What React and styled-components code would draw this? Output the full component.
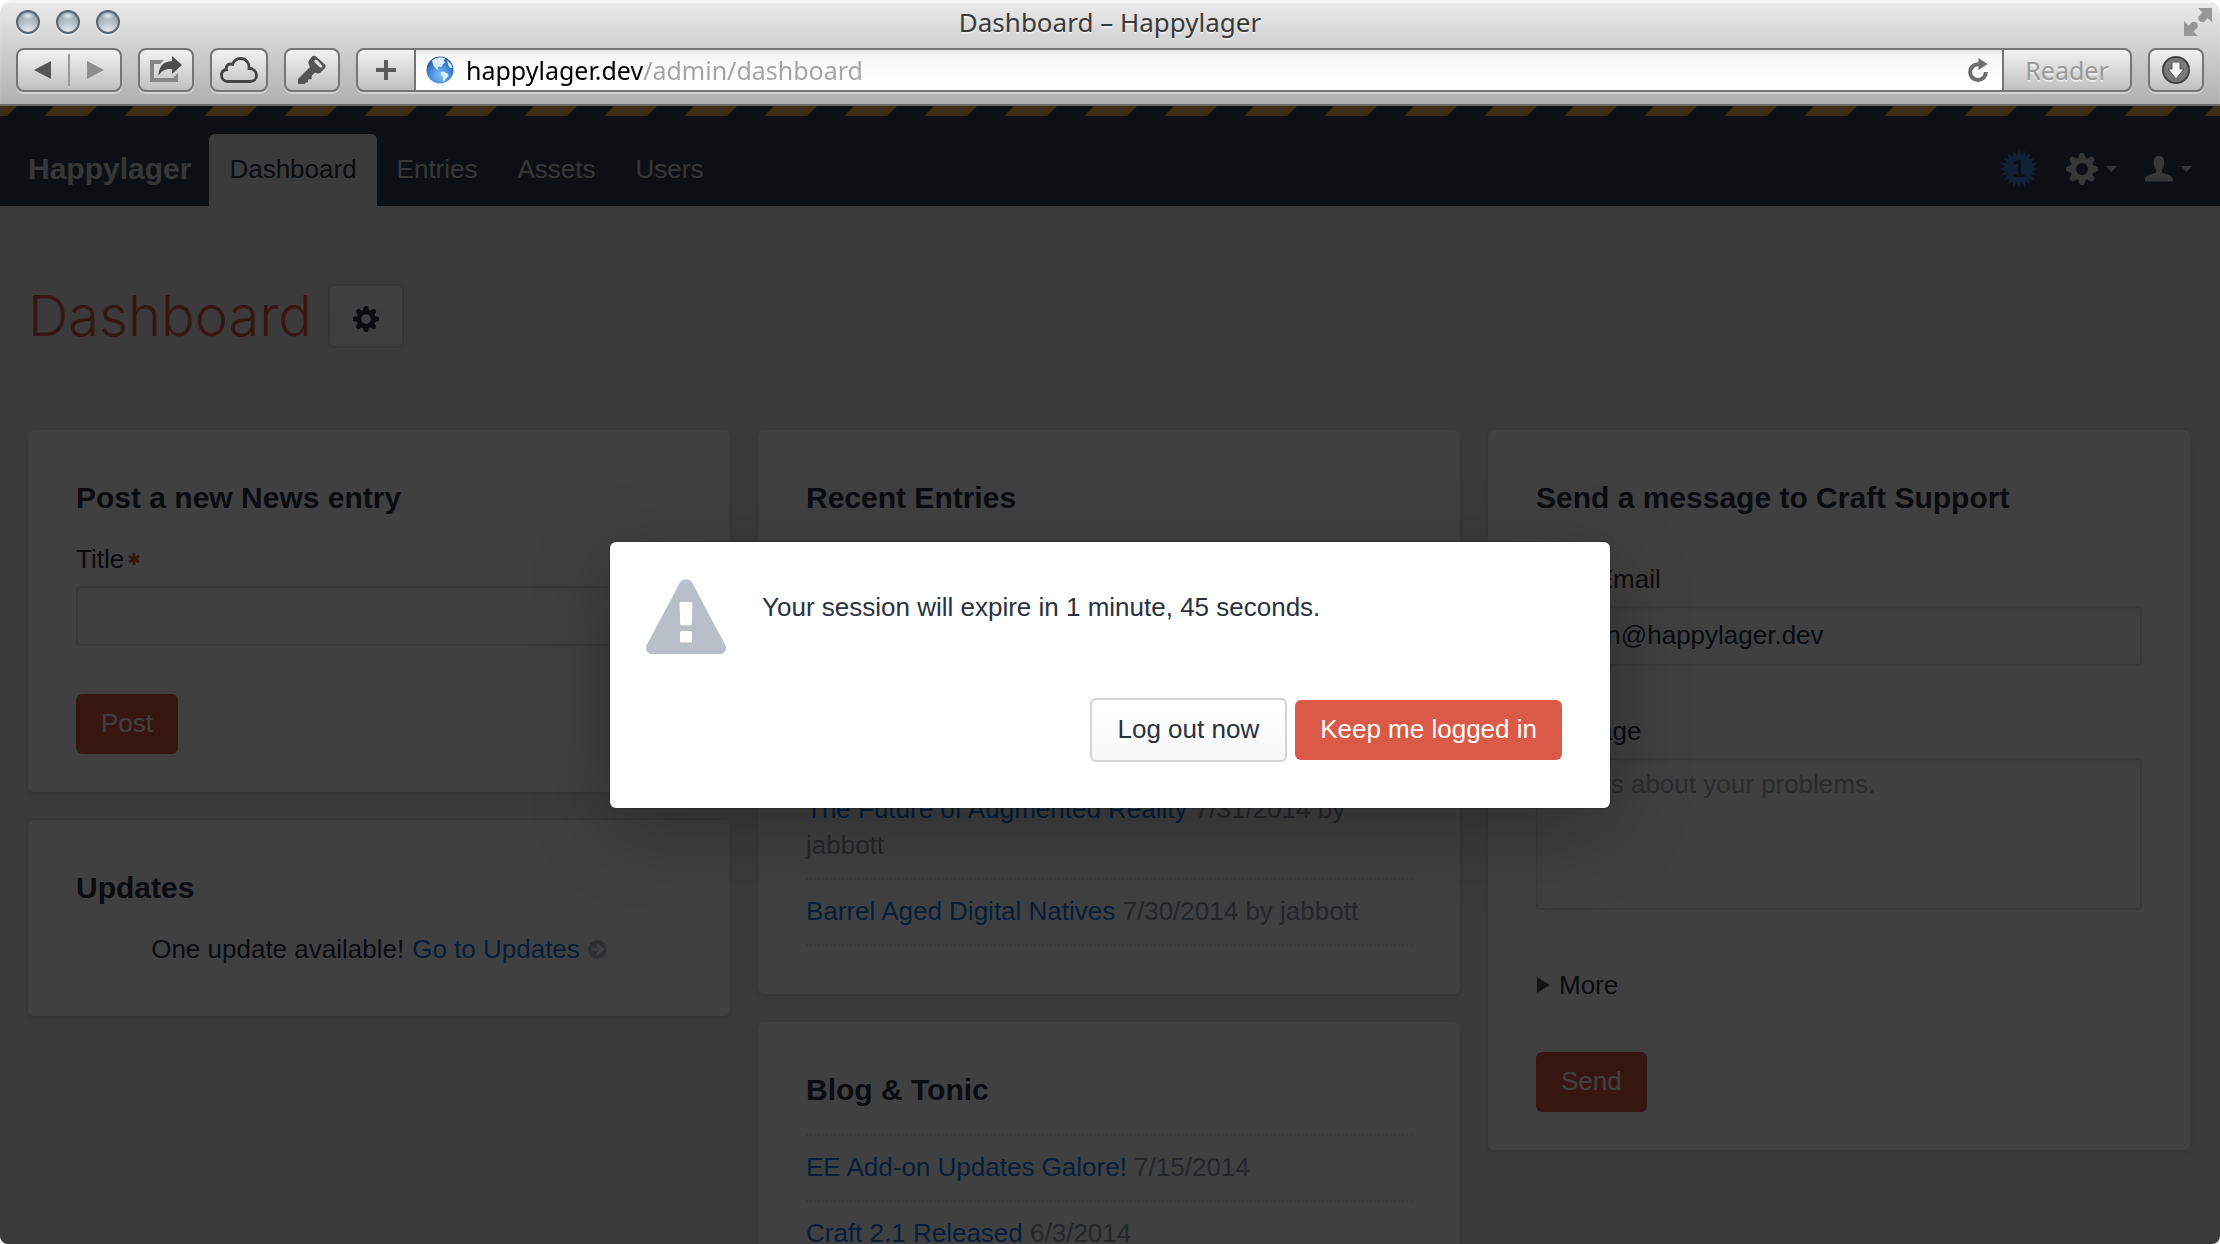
import React, { useState } from "react";
import styled, { createGlobalStyle, css } from "styled-components";

const sans = `"Liberation Sans", Arial, Helvetica, sans-serif`;
const chromeFont = `"Noto Sans", "Open Sans", sans-serif`;

const color = {
  ink: "#29323d",
  red: "#da5a47",
  link: "#0d78f2",
  light: "#8f98a3",
  header: "#333f4d",
  page: "#ebebeb",
};

const GlobalStyle = createGlobalStyle`
  *, *::before, *::after { box-sizing: border-box; }
  html, body, #root { height: 100%; }
  body {
    margin: 0;
    background: #fff;
    color: ${color.ink};
    font: 26px/36px ${sans};
  }
  button, input, textarea { font: inherit; color: inherit; margin: 0; }
  button { cursor: pointer; }
  svg { display: block; flex: none; }
`;

/* ---------- window chrome ---------- */

const Window = styled.div`
  display: flex;
  flex-direction: column;
  height: 100vh;
  overflow: hidden;
  border-radius: 14px 14px 8px 8px;
`;

const Chrome = styled.header`
  flex: none;
  padding-bottom: 12px;
  border-bottom: 2px solid #6a6a6a;
  background: linear-gradient(#ebebeb, #d0d0d0 48px, #b0b0b0);
  box-shadow: inset 0 3px 1px #f5f5f5;
  font-family: ${chromeFont};
`;

const TitleBar = styled.div`
  display: grid;
  grid-template-columns: 1fr auto 1fr;
  align-items: center;
  height: 44px;
  padding: 0 8px;
  margin-bottom: 4px;
`;

const WindowTitle = styled.div`
  font-size: 26px;
  color: #3a3a3a;
  text-shadow: 0 2px 0 rgba(255, 255, 255, 0.5);
`;

const Lights = styled.div`
  display: flex;
  gap: 16px;
  padding-left: 8px;
`;

const Light = styled.button`
  width: 24px;
  height: 24px;
  padding: 0;
  border: 2px solid #5a6670;
  border-radius: 50%;
  background:
    radial-gradient(ellipse 7px 4px at 50% 4px, #e4eef2, transparent),
    radial-gradient(circle at 50% 95%, #dce2e6 10%, #8b9ba8 85%);
  box-shadow: 0 2px 0 rgba(255, 255, 255, 0.5);
`;

const Fullscreen = styled.button`
  justify-self: end;
  padding: 0;
  border: 0;
  background: none;
`;

const Toolbar = styled.div`
  display: flex;
  gap: 16px;
  padding: 0 16px;
`;

const chromeFace = css`
  border: 2px solid #757575;
  background: linear-gradient(#f2f2f2, #c0c0c0);
`;

const ToolButton = styled.button`
  ${chromeFace}
  display: flex;
  align-items: center;
  justify-content: center;
  flex: none;
  width: ${(p) => p.$width || 56}px;
  height: 44px;
  padding: 0;
  border-radius: 8px;
  box-shadow: 0 2px 0 rgba(255, 255, 255, 0.4);
`;

const ButtonPair = styled.div`
  ${chromeFace}
  display: flex;
  width: 106px;
  height: 44px;
  padding: 4px 0;
  border-radius: 8px;
  box-shadow: 0 2px 0 rgba(255, 255, 255, 0.4);
`;

const PairButton = styled.button`
  display: flex;
  flex: 1;
  align-items: center;
  justify-content: center;
  padding: 0;
  border: 0;
  background: none;
  & + & { border-left: 2px solid #999; }
`;

const AddressGroup = styled.div`
  ${chromeFace}
  display: flex;
  flex: 1;
  height: 44px;
  border-radius: 8px;
  overflow: hidden;
  box-shadow: 0 2px 0 rgba(255, 255, 255, 0.4);
`;

const GroupButton = styled.button`
  display: flex;
  align-items: center;
  justify-content: center;
  width: ${(p) => p.$width}px;
  padding: 0;
  border: 0;
  background: none;
  color: #999;
  font-size: 25px;
  text-shadow: 0 2px 0 rgba(255, 255, 255, 0.6);
`;

const Address = styled.label`
  display: flex;
  flex: 1;
  align-items: center;
  gap: 12px;
  padding: 0 14px 0 10px;
  border: solid #757575;
  border-width: 0 2px;
  background: linear-gradient(#e2e2e2, #f6f6f6 5px, #fff 80%);
`;

const AddressInput = styled.input`
  flex: 1;
  min-width: 0;
  padding: 0;
  border: 0;
  outline: 0;
  color: #000;
  background: linear-gradient(90deg, #000 177px, #a3a3a3 177px);
  background-clip: text;
  -webkit-text-fill-color: transparent;
  font-size: 25px;
  line-height: 36px;
`;

const Reload = styled.button`
  padding: 0;
  border: 0;
  background: none;
`;

/* ---------- control panel ---------- */

const Viewport = styled.div`
  position: relative;
  flex: 1;
  min-height: 0;
  overflow: hidden;
  background: ${color.page};
`;

const Header = styled.header`
  background: ${color.header};
`;

const HeaderRow = styled.div`
  display: flex;
  align-items: flex-end;
  height: 90px;
  padding: 0 28px;
  line-height: 70px;
`;

const Brand = styled.a`
  margin-right: 18px;
  padding-bottom: 2px;
  color: #dcdcdc;
  font-size: 30px;
  font-weight: bold;
  text-decoration: none;
`;

const Nav = styled.nav`
  display: flex;
  flex: 1;
`;

const NavLink = styled.a`
  padding: 0 20px 2px;
  border-radius: 6px 6px 0 0;
  color: ${(p) => (p.$active ? color.ink : "#dcdcdc")};
  background: ${(p) => (p.$active ? color.page : "transparent")};
  text-decoration: none;
`;

const HeaderActions = styled.div`
  display: flex;
  align-items: center;
  gap: 28px;
  height: 72px;
  padding-bottom: 2px;
`;

const HeaderButton = styled.button`
  display: flex;
  align-items: center;
  gap: 8px;
  padding: 0;
  border: 0;
  background: none;
  color: #dcdcdc;
`;

const Badge = styled.button`
  display: grid;
  place-items: center;
  padding: 0;
  border: 0;
  background: none;
  color: ${color.header};
  font-size: 24px;
  font-weight: bold;
  line-height: 38px;
  & > * { grid-area: 1 / 1; }
`;

const PageHeader = styled.div`
  display: flex;
  align-items: center;
  gap: 16px;
  padding: 78px 28px 82px;
`;

const PageTitle = styled.h1`
  margin: 0;
  color: ${color.red};
  font: 300 56px/64px Inter, ${sans};
`;

const Button = styled.button`
  height: ${(p) => (p.$primary ? 60 : 64)}px;
  padding: 0 25px 2px;
  border-radius: 6px;
  white-space: nowrap;
  ${(p) =>
    p.$primary
      ? css`
          border: 0;
          background: ${color.red};
          color: #fff;
        `
      : css`
          padding: 0 26px 2px;
          border: 2px solid #d4d4d4;
          background: linear-gradient(#fff, #f8f8f8);
          color: ${color.ink};
        `}
`;

const IconButton = styled(Button)`
  padding: 6px 23px 0;
`;

const Columns = styled.main`
  display: grid;
  grid-template-columns: repeat(3, 1fr);
  align-items: start;
  gap: 28px;
  padding: 0 30px 28px 28px;
`;

const Column = styled.div`
  display: grid;
  gap: 28px;
`;

const Card = styled.section`
  padding: 48px 48px ${(p) => (p.$form ? 38 : 48)}px;
  border-radius: 6px;
  background: #fff;
  box-shadow: 0 0 0 2px rgba(0, 20, 10, 0.04), 0 4px 8px rgba(0, 20, 10, 0.06);
`;

const CardTitle = styled.h2`
  margin: 0 0 24px;
  font-size: 30px;
  line-height: 40px;
`;

const Form = styled.form`
  display: grid;
  gap: 48px;
  justify-items: start;
  padding-top: ${(p) => (p.$spaced ? 20 : 0)}px;
`;

const Field = styled.div`
  display: grid;
  gap: 10px;
  width: 100%;
`;

const Label = styled.label`
  display: flex;
  align-items: center;
  gap: 4px;
  line-height: 34px;
`;

const fieldFace = css`
  width: 100%;
  border: 2px solid #dedede;
  border-radius: 4px;
  background: #fff;
  box-shadow: inset 0 2px 6px rgba(0, 0, 0, 0.06);
  outline: 0;
`;

const TextInput = styled.input`
  ${fieldFace}
  height: 60px;
  padding: 0 12px 2px;
`;

const TextArea = styled.textarea`
  ${fieldFace}
  display: block;
  height: 152px;
  padding: 6px 12px;
  resize: none;
  &::placeholder { color: #aaaeb3; opacity: 1; }
`;

const Toggle = styled.button`
  display: flex;
  align-items: center;
  gap: 8px;
  margin-top: 10px;
  padding: 0 0 2px;
  border: 0;
  background: none;
  line-height: 34px;
`;

const Centered = styled.p`
  display: flex;
  align-items: center;
  justify-content: center;
  gap: 8px;
  margin: 0;
  padding-bottom: 2px;
  line-height: 34px;
`;

const Link = styled.a`
  color: ${color.link};
  text-decoration: none;
`;

const Entries = styled.ul`
  margin: 0;
  padding: 0;
  border-top: 2px dotted #e8e8e8;
  list-style: none;
`;

const Entry = styled.li`
  padding: 13px 0 15px;
  border-bottom: 2px dotted #e8e8e8;
  color: ${color.light};
`;

/* ---------- session dialog ---------- */

const Shade = styled.div`
  position: absolute;
  inset: 0;
  display: flex;
  align-items: center;
  justify-content: center;
  background: rgba(0, 0, 0, 0.75);
`;

const Dialog = styled.div`
  display: grid;
  gap: 44px;
  width: 1000px;
  max-width: 90%;
  padding: 36px 48px 46px 36px;
  border-radius: 6px;
  background: #fff;
  box-shadow: 0 0 2px rgba(0, 0, 0, 0.3), 0 20px 80px rgba(0, 0, 0, 0.28);
`;

const DialogBody = styled.div`
  display: flex;
  gap: 36px;
`;

const DialogText = styled.p`
  margin: 0;
  padding-top: 11px;
`;

const DialogActions = styled.div`
  display: flex;
  align-items: center;
  justify-content: flex-end;
  gap: 8px;
`;

/* ---------- icons ---------- */

const ring = (points) =>
  points.map(([r, a]) => `${(r * Math.sin(a)).toFixed(2)},${(-r * Math.cos(a)).toFixed(2)}`).join(" L");

const gearPath = () => {
  const pts = [];
  for (let i = 0; i < 8; i++) {
    const a = (i * Math.PI) / 4;
    pts.push([11.6, a - 0.32], [15.8, a - 0.15], [16.2, a], [15.8, a + 0.15], [11.6, a + 0.32]);
  }
  return `M${ring(pts)} Z M6,0 A6,6 0 1 0 -6,0 A6,6 0 1 0 6,0 Z`;
};

const burstPath = () => {
  const pts = [];
  for (let i = 0; i < 40; i++) pts.push([i % 2 ? 13.5 : 19.5, (i * Math.PI) / 20]);
  return `M${ring(pts)} Z`;
};

const GearIcon = ({ size = 32 }) => (
  <svg width={size} height={size} viewBox="-16 -16 32 32" aria-hidden="true">
    <path d={gearPath()} fill="currentColor" fillRule="evenodd" />
  </svg>
);

const CaretIcon = () => (
  <svg width="11" height="6" viewBox="0 0 11 6" aria-hidden="true">
    <path d="M0 0H11L5.500 6Z" fill="currentColor" />
  </svg>
);

const UserIcon = () => (
  <svg width="28" height="26" viewBox="0 0 28 26" aria-hidden="true">
    <path
      d="M14 0C18 0 19.500 3 19.200 7C19 10.500 18 12.500 16.800 14C16.500 16 17 17 19 17.600C24 19 28 20 28 24.500V25.500H0V24.500C0 20 4 19 9 17.600C11 17 11.500 16 11.200 14C10 12.500 9 10.500 8.800 7C8.500 3 10 0 14 0Z"
      fill="currentColor"
    />
  </svg>
);

const BurstIcon = () => (
  <svg width="38" height="38" viewBox="-19 -19 38 38" overflow="visible" aria-hidden="true">
    <path d={burstPath()} fill="#4880dc" />
  </svg>
);

const Hazard = () => (
  <svg width="100%" height="10" aria-hidden="true">
    <defs>
      <pattern id="hazard" width="80" height="10" patternUnits="userSpaceOnUse">
        <path d="M0 0H17L7 10H0Z M54 0H80V10H44Z" fill="#f0b450" />
      </pattern>
    </defs>
    <rect width="100%" height="10" fill="url(#hazard)" />
  </svg>
);

const ArrowIcon = ({ back }) => (
  <svg width="18" height="18" viewBox="0 0 18 18" aria-hidden="true">
    <path d={back ? "M17 0V18L0 9Z" : "M1 0V18L18 9Z"} fill={back ? "#555" : "#8e8e8e"} />
  </svg>
);

const ShareIcon = () => (
  <svg width="34" height="28" viewBox="0 0 34 28" aria-hidden="true">
    <path d="M15 4H1V26H29V17L25 21V22H5V8H11Z" fill="#858585" />
    <path d="M23 0L33 9L23 18V13C16 12.500 12 15 9.500 20C9.500 11 14 5.500 23 5Z" fill="#4d4d4d" />
  </svg>
);

const CloudIcon = () => (
  <svg width="40" height="28" viewBox="0 0 40 28" aria-hidden="true">
    <path
      d="M9 25.500C4.500 25.500 2.500 22.500 2.500 19.500C2.500 16.500 4.500 14 7.500 13.500C6.500 9.500 10 7 13.500 8.500C15 4.500 18 2.500 21.500 2.500C27 2.500 30.500 7 30 12.500C34.500 12.500 37.500 15.500 37.500 19.500C37.500 23 35 25.500 31 25.500Z"
      fill="none"
      stroke="#454545"
      strokeWidth="2.800"
    />
  </svg>
);

const KeyIcon = () => (
  <svg width="30" height="30" viewBox="0 0 30 30" aria-hidden="true">
    <path
      d="M15 1.500Q17 0 19 1.500L28 9.500Q29.500 11 28 13L23 18Q21 19 18 17.500L14.500 21L15 24L11 24.500V27L8 28V29H1V24L13 12Q10.500 8 12 5.500ZM18.500 4.500Q16.500 5.500 17.500 7L23 12.500Q24.500 13 25.500 11.500Q25.500 10.500 20 5Z"
      fill="#555"
      fillRule="evenodd"
    />
  </svg>
);

const PlusIcon = () => (
  <svg width="20" height="20" viewBox="0 0 20 20" aria-hidden="true">
    <path d="M8 0H12V8H20V12H12V20H8V12H0V8H8Z" fill="#5a5a5a" />
  </svg>
);

const GlobeIcon = () => (
  <svg width="28" height="28" viewBox="0 0 28 28" aria-hidden="true">
    <defs>
      <radialGradient id="sea" cx="50%" cy="70%" r="65%">
        <stop offset="0" stopColor="#7cc0f6" />
        <stop offset="0.600" stopColor="#4189d8" />
        <stop offset="1" stopColor="#2458a8" />
      </radialGradient>
    </defs>
    <circle cx="14" cy="14" r="13.500" fill="url(#sea)" />
    <path
      d="M6 4.500Q9 1.500 14 1.200Q17 1.300 19 2.500L18 5L19.500 6.500L17 8L15.500 11L12.500 10.500L11.500 12L13 14.500L10 13L7 8.500Z"
      fill="#dceefb"
    />
    <path d="M15 16L18 15.500L22 18L22.500 20L19.500 23L18 26L16.500 24L17 21L14.500 18Z M21 4L25 8L26.500 12L24 12L22 8.500Z" fill="#dceefb" />
  </svg>
);

const ReloadIcon = () => (
  <svg width="20" height="24" viewBox="0 0 20 24" aria-hidden="true">
    <path d="M12 6.200H10A7.900 7.900 0 1 0 17.900 14" fill="none" stroke="#6e6e6e" strokeWidth="4" />
    <path d="M10.500 0L19.500 6L10.500 12Z" fill="#6e6e6e" />
  </svg>
);

const DownloadIcon = () => (
  <svg width="28" height="28" viewBox="0 0 28 28" aria-hidden="true">
    <circle cx="14" cy="14" r="13" fill="#7a7a7a" stroke="#444" strokeWidth="2" />
    <path d="M10 6H18V13H22L14 23L6 13H10Z" fill="#f4f4f4" stroke="#555" />
  </svg>
);

const FullscreenIcon = () => (
  <svg width="28" height="28" viewBox="0 0 28 28" aria-hidden="true">
    <path
      d="M14 0H28V14L23.500 10L20 14Q17 14.500 15.500 13Q13.500 11 14.500 8.500L18.500 4.500Z M0 28V13L4.500 17.500L8 14Q11 13 12.700 14.800Q14.500 17 13.500 19.500L9.500 23.500L14 28Z"
      fill="#979797"
    />
  </svg>
);

const AsteriskIcon = () => (
  <svg width="12" height="12" viewBox="-6 -6 12 12" aria-hidden="true">
    <path d="M0-6V6M-5.200-3L5.200 3M-5.200 3L5.200-3" stroke={color.red} strokeWidth="3" />
  </svg>
);

const GoIcon = () => (
  <svg width="19" height="19" viewBox="0 0 19 19" aria-hidden="true">
    <circle cx="9.500" cy="9.500" r="9.500" fill="#b9bfc6" />
    <path d="M3.500 9.500H13M9 4.500L14 9.500L9 14.500" fill="none" stroke="#fff" strokeWidth="2.600" />
  </svg>
);

const TriangleIcon = () => (
  <svg width="15" height="16" viewBox="0 0 15 16" aria-hidden="true">
    <path d="M1 0L14 8L1 16Z" fill="#555" />
  </svg>
);

const AlertIcon = () => (
  <svg width="80" height="76" viewBox="0 0 80 76" aria-hidden="true">
    <path
      d="M34 4.500C36.500 0 43.500 0 46 4.500L79 66.500C81.500 71 78.500 76 74 76H6C1.500 76-1.500 71 1 66.500Z"
      fill="#b9bfc8"
    />
    <path
      d="M35 24H45Q46.500 24 46.400 25.500L45.800 46Q45.800 47.200 44.500 47.200H35.500Q34.200 47.200 34.200 46L33.600 25.500Q33.500 24 35 24ZM35.500 53H44.500Q46 53 46 54.500V63Q46 64.500 44.500 64.500H35.500Q34 64.500 34 63V54.500Q34 53 35.500 53Z"
      fill="#fff"
    />
  </svg>
);

/* ---------- content ---------- */

const navItems = ["Dashboard", "Entries", "Assets", "Users"];

const recentEntries = [
  { title: "Photography Folio Featured on BLDG.WRK", meta: "8/3/2014 by jabbott" },
  { title: "Bringing Out Play", meta: "8/2/2014 by jabbott" },
  { title: "DIY Six-Pack Carriers", meta: "8/1/2014 by jabbott" },
  { title: "The Future of Augmented Reality", meta: "7/31/2014 by jabbott" },
  { title: "Barrel Aged Digital Natives", meta: "7/30/2014 by jabbott" },
];

const blogEntries = [
  { title: "EE Add-on Updates Galore!", meta: "7/15/2014" },
  { title: "Craft 2.1 Released", meta: "6/3/2014" },
];

const EntryList = ({ items }) => (
  <Entries>
    {items.map((item) => (
      <Entry key={item.title}>
        <Link href="#">{item.title}</Link> {item.meta}
      </Entry>
    ))}
  </Entries>
);

const BrowserChrome = () => {
  const [url, setUrl] = useState("happylager.dev/admin/dashboard");
  return (
    <Chrome>
      <TitleBar>
        <Lights>
          <Light aria-label="Close" />
          <Light aria-label="Minimize" />
          <Light aria-label="Zoom" />
        </Lights>
        <WindowTitle>Dashboard – Happylager</WindowTitle>
        <Fullscreen aria-label="Full screen">
          <FullscreenIcon />
        </Fullscreen>
      </TitleBar>
      <Toolbar>
        <ButtonPair>
          <PairButton aria-label="Back">
            <ArrowIcon back />
          </PairButton>
          <PairButton aria-label="Forward">
            <ArrowIcon />
          </PairButton>
        </ButtonPair>
        <ToolButton aria-label="Share">
          <ShareIcon />
        </ToolButton>
        <ToolButton $width={58} aria-label="iCloud tabs">
          <CloudIcon />
        </ToolButton>
        <ToolButton aria-label="Passwords">
          <KeyIcon />
        </ToolButton>
        <AddressGroup>
          <GroupButton $width={56} aria-label="Add bookmark">
            <PlusIcon />
          </GroupButton>
          <Address>
            <GlobeIcon />
            <AddressInput aria-label="Address" value={url} onChange={(e) => setUrl(e.target.value)} />
            <Reload aria-label="Reload">
              <ReloadIcon />
            </Reload>
          </Address>
          <GroupButton $width={126}>Reader</GroupButton>
        </AddressGroup>
        <ToolButton aria-label="Downloads">
          <DownloadIcon />
        </ToolButton>
      </Toolbar>
    </Chrome>
  );
};

export default function App() {
  const [email, setEmail] = useState("admin@happylager.dev");
  return (
    <Window>
      <GlobalStyle />
      <BrowserChrome />
      <Viewport>
        <Header>
          <Hazard />
          <HeaderRow>
            <Brand href="#">Happylager</Brand>
            <Nav>
              {navItems.map((item, i) => (
                <NavLink key={item} href="#" $active={i === 0}>
                  {item}
                </NavLink>
              ))}
            </Nav>
            <HeaderActions>
              <Badge aria-label="1 update available">
                <BurstIcon />
                <span>1</span>
              </Badge>
              <HeaderButton aria-label="Settings">
                <GearIcon />
                <CaretIcon />
              </HeaderButton>
              <HeaderButton aria-label="Account">
                <UserIcon />
                <CaretIcon />
              </HeaderButton>
            </HeaderActions>
          </HeaderRow>
        </Header>

        <PageHeader>
          <PageTitle>Dashboard</PageTitle>
          <IconButton aria-label="Widget settings">
            <GearIcon size={26} />
          </IconButton>
        </PageHeader>

        <Columns>
          <Column>
            <Card $form>
              <CardTitle>Post a new News entry</CardTitle>
              <Form>
                <Field>
                  <Label htmlFor="title">
                    Title
                    <AsteriskIcon />
                  </Label>
                  <TextInput id="title" />
                </Field>
                <Button type="button" $primary>
                  Post
                </Button>
              </Form>
            </Card>
            <Card>
              <CardTitle>Updates</CardTitle>
              <Centered>
                <span>One update available!</span>
                <Link href="#">Go to Updates</Link>
                <GoIcon />
              </Centered>
            </Card>
          </Column>

          <Column>
            <Card>
              <CardTitle>Recent Entries</CardTitle>
              <EntryList items={recentEntries} />
            </Card>
            <Card>
              <CardTitle>Blog &amp; Tonic</CardTitle>
              <EntryList items={blogEntries} />
            </Card>
          </Column>

          <Column>
            <Card $form>
              <CardTitle>Send a message to Craft Support</CardTitle>
              <Form $spaced>
                <Field>
                  <Label htmlFor="email">Your Email</Label>
                  <TextInput id="email" value={email} onChange={(e) => setEmail(e.target.value)} />
                </Field>
                <Field>
                  <Label htmlFor="message">Message</Label>
                  <TextArea id="message" placeholder="Tell us about your problems." />
                </Field>
                <Toggle type="button">
                  <TriangleIcon />
                  More
                </Toggle>
                <Button type="button" $primary>
                  Send
                </Button>
              </Form>
            </Card>
          </Column>
        </Columns>

        <Shade>
          <Dialog role="alertdialog" aria-modal="true" aria-describedby="session-text">
            <DialogBody>
              <AlertIcon />
              <DialogText id="session-text">Your session will expire in 1 minute, 45 seconds.</DialogText>
            </DialogBody>
            <DialogActions>
              <Button>Log out now</Button>
              <Button $primary>Keep me logged in</Button>
            </DialogActions>
          </Dialog>
        </Shade>
      </Viewport>
    </Window>
  );
}
